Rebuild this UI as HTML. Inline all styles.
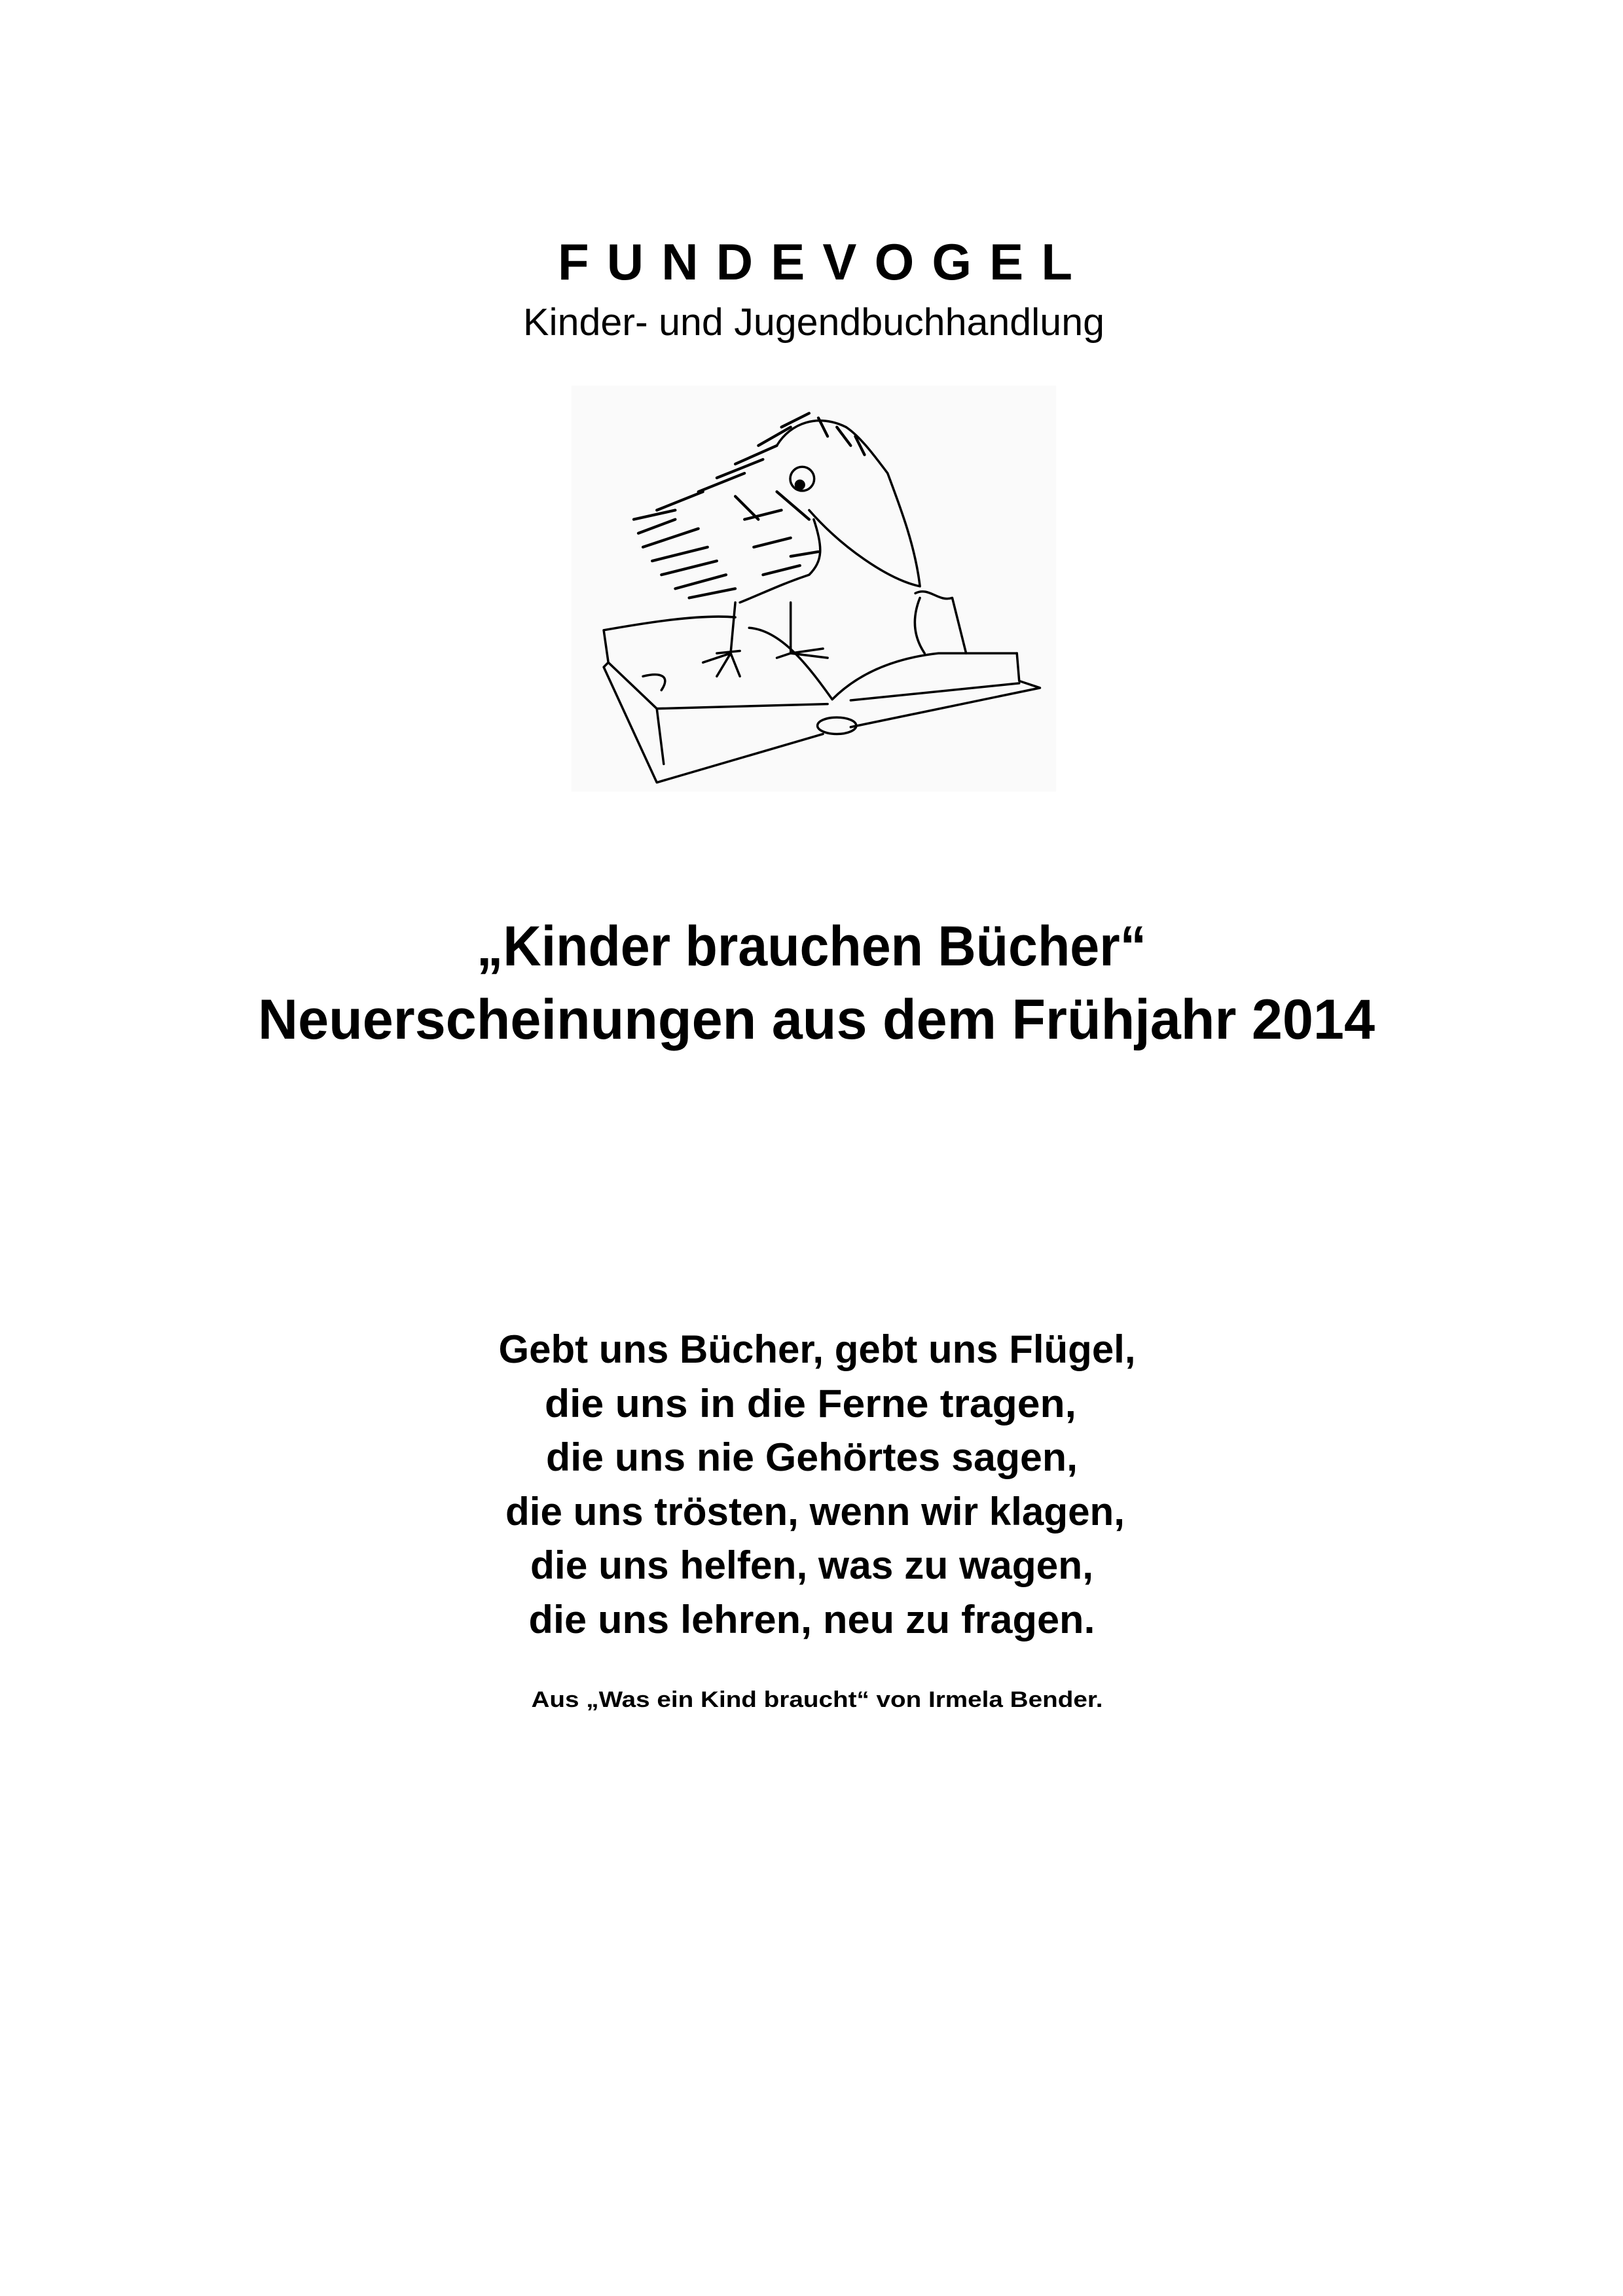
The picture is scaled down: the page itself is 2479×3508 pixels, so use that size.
<!DOCTYPE html>
<html><head><meta charset="utf-8"><style>
html,body{margin:0;padding:0;background:#fff}
body{width:2479px;height:3508px;position:relative;overflow:hidden}
svg{position:absolute;left:0;top:0}
</style></head><body>
<svg width="2479" height="3508" viewBox="0 0 2479 3508">
<g fill="#000" text-anchor="start">
<text x="852" y="427" font-family="Liberation Sans, sans-serif" font-weight="bold" font-size="78" textLength="786" lengthAdjust="spacing">FUNDEVOGEL</text>
<text x="799" y="512" font-family="Liberation Sans, sans-serif" font-size="58" textLength="888" lengthAdjust="spacingAndGlyphs">Kinder- und Jugendbuchhandlung</text>
<text x="728" y="1475" font-family="Liberation Sans, sans-serif" font-weight="bold" font-size="86" textLength="1023" lengthAdjust="spacingAndGlyphs">„Kinder brauchen Bücher“</text>
<text x="394" y="1587" font-family="Liberation Sans, sans-serif" font-weight="bold" font-size="86" textLength="1706" lengthAdjust="spacingAndGlyphs">Neuerscheinungen aus dem Frühjahr 2014</text>
<g font-family="Liberation Sans, sans-serif" font-weight="bold" font-size="60" text-anchor="middle">
<text x="1248" y="2082" textLength="973" lengthAdjust="spacingAndGlyphs">Gebt uns Bücher, gebt uns Flügel,</text>
<text x="1238" y="2165" textLength="812" lengthAdjust="spacingAndGlyphs">die uns in die Ferne tragen,</text>
<text x="1240" y="2247" textLength="812" lengthAdjust="spacingAndGlyphs">die uns nie Gehörtes sagen,</text>
<text x="1245" y="2330" textLength="946" lengthAdjust="spacingAndGlyphs">die uns trösten, wenn wir klagen,</text>
<text x="1240" y="2412" textLength="860" lengthAdjust="spacingAndGlyphs">die uns helfen, was zu wagen,</text>
<text x="1240" y="2495" textLength="865" lengthAdjust="spacingAndGlyphs">die uns lehren, neu zu fragen.</text>
<text x="1248" y="2608" font-size="34" textLength="873" lengthAdjust="spacingAndGlyphs">Aus „Was ein Kind braucht“ von Irmela Bender.</text>
</g>
</g>
</svg>
<svg width="1100" height="1100" viewBox="0 0 1560 1560" style="left:700px;top:300px">
<rect x="245" y="410" width="1050" height="880" fill="#fafafa"/>
<g fill="none" stroke="#000" stroke-width="5" stroke-linecap="round" stroke-linejoin="round">
<path d="M315,940 C400,925 520,905 600,912 M315,940 L325,1010 L315,1020 L430,1270 L790,1165 M850,1150 L1260,1065 L1215,1050 L1210,990"/>
<path d="M630,935 C700,940 760,1020 810,1090 C870,1030 950,1000 1040,990 L1210,990"/>
<path d="M430,1110 L800,1100 M850,1092 L1215,1055 M325,1010 L430,1110 L445,1230"/>
<path d="M440,1070 C460,1040 440,1030 400,1040"/>
<ellipse cx="820" cy="1147" rx="42" ry="18"/>
<path d="M990,860 C1020,845 1040,880 1070,870 L1100,990 M1000,870 C980,920 990,960 1010,990"/>
<path d="M760,680 C830,760 930,830 1000,845 C990,760 960,680 930,600 C900,560 870,520 840,500"/>
<path d="M690,540 C720,490 780,470 840,500"/>
<circle cx="745" cy="612" r="26"/>
<circle cx="740" cy="625" r="9" fill="#000"/>
<path d="M600,880 L590,990 M560,990 L610,985 M530,1010 L590,990 L610,1040 M590,990 L560,1040 M720,880 L720,990 L690,1000 M720,990 L790,980 M720,990 L800,1000"/>
<path d="M610,880 C660,860 700,840 760,820 C790,790 790,760 770,700" />
</g>
<g stroke="#000" stroke-width="6" stroke-linecap="round">
<path d="M390,730 L470,700 M400,760 L520,720 M420,790 L540,760 M440,820 L560,790 M470,850 L580,820 M500,870 L600,850 M380,700 L470,680 M430,680 L530,640 M520,640 L620,600 M560,610 L660,570 M600,580 L690,540 M650,540 L720,500 M700,500 L760,470 M780,480 L800,520 M820,500 L850,540 M860,520 L880,560 M620,700 L700,680 M640,760 L720,740 M660,820 L740,800 M690,640 L760,700 M600,650 L650,700 M720,780 L780,770"/>
</g>
</svg>
</body></html>
